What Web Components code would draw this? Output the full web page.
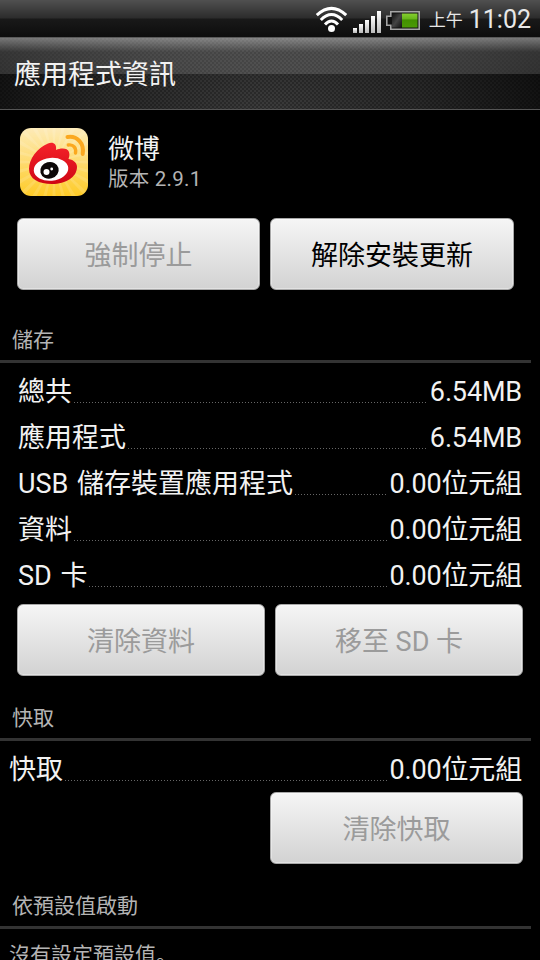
<!DOCTYPE html>
<html lang="zh-Hant">
<head>
<meta charset="utf-8">
<title>應用程式資訊</title>
<style>
  body {
    margin: 0;
    background: #000;
    color: #f2f2f2;
    font-family: Roboto, "Noto Sans CJK TC", sans-serif;
    overflow: hidden;
  }
</style>
</head>
<body>
<app-screen>
  <status-bar slot="status"><span slot="period">上午</span><span slot="time">11:02</span></status-bar>
  <title-bar slot="title">應用程式資訊</title-bar>

  <app-header><span slot="name">微博</span><span slot="version">版本 2.9.1</span></app-header>
  <button-row style="--pad: 0 26px 8px 17px; --cols: 243px 1fr">
    <htc-button disabled>強制停止</htc-button>
    <htc-button>解除安裝更新</htc-button>
  </button-row>

  <section-title>儲存</section-title>
  <info-row><span slot="label">總共</span>6.54MB</info-row>
  <info-row><span slot="label">應用程式</span>6.54MB</info-row>
  <info-row><span slot="label">USB 儲存裝置應用程式</span>0.00位元組</info-row>
  <info-row><span slot="label">資料</span>0.00位元組</info-row>
  <info-row><span slot="label">SD 卡</span>0.00位元組</info-row>
  <button-row style="--pad: 6px 17px 0 17px; --cols: 1fr 1fr">
    <htc-button disabled>清除資料</htc-button>
    <htc-button disabled>移至 SD 卡</htc-button>
  </button-row>

  <section-title>快取</section-title>
  <info-row style="--left: 9px"><span slot="label">快取</span>0.00位元組</info-row>
  <button-row style="--pad: 0 17px 0 270px">
    <htc-button disabled>清除快取</htc-button>
  </button-row>

  <section-title>依預設值啟動</section-title>
  <note-text>沒有設定預設值<span style="font-family: 'Noto Sans CJK SC'" lang="zh-Hans">。</span></note-text>
</app-screen>

<script>
  class AppScreen extends HTMLElement {
    constructor() {
      super();
      this.attachShadow({ mode: "open" }).innerHTML = `
        <style>
          :host {
            display: flex;
            flex-direction: column;
            width: 540px;
            height: 960px;
            overflow: hidden;
            background: #000;
          }
          main {
            display: flex;
            flex-direction: column;
          }
        </style>
        <slot name="status"></slot>
        <slot name="title"></slot>
        <main><slot></slot></main>
      `;
    }
  }

  class StatusBar extends HTMLElement {
    constructor() {
      super();
      this.attachShadow({ mode: "open" }).innerHTML = `
        <style>
          :host {
            display: flex;
            justify-content: flex-end;
            box-sizing: border-box;
            height: 37px;
            flex-shrink: 0;
            padding-right: 9px;
            background: linear-gradient(#505050, #2c2c2c 18px, #191919 19px, #0d0d0d);
            color: #e8e8e8;
            white-space: nowrap;
          }
          svg { display: block; margin-right: 9px; }
          .period { font-size: 17px; line-height: 41px; margin-right: 6px; }
          .time { font-size: 25px; line-height: 39px; }
        </style>
        <svg width="106" height="37" viewBox="314 0 106 37">
          <defs>
            <linearGradient id="bars" x1="0" y1="0" x2="0" y2="1">
              <stop offset="0" stop-color="#fff"/>
              <stop offset="1" stop-color="#bbb"/>
            </linearGradient>
            <linearGradient id="charge" x1="0" y1="0" x2="0" y2="1">
              <stop offset="0" stop-color="#86cf30"/>
              <stop offset=".4" stop-color="#66b51a"/>
              <stop offset=".45" stop-color="#429000"/>
              <stop offset="1" stop-color="#4b9a05"/>
            </linearGradient>
            <linearGradient id="empty" x1="0" y1="0" x2="1" y2="1">
              <stop offset="0" stop-color="#111"/>
              <stop offset=".5" stop-color="#444"/>
              <stop offset="1" stop-color="#111"/>
            </linearGradient>
          </defs>
          <!-- wifi -->
          <g fill="none" stroke="#fff" stroke-width="3">
            <path d="M316.800 15.200 Q331.500 1.500 346.200 15.200"/>
            <path d="M320.800 20 Q331.500 9.200 342.200 20"/>
            <path d="M325 24.500 Q331.500 17.500 338 24.500"/>
          </g>
          <circle cx="331.500" cy="28.500" r="3.500" fill="#fff"/>
          <!-- signal -->
          <g fill="url(#bars)">
            <rect x="353" y="28" width="4" height="5"/>
            <rect x="359" y="24" width="4" height="9"/>
            <rect x="365" y="20" width="4" height="13"/>
            <rect x="371" y="16" width="4" height="17"/>
            <rect x="377" y="11" width="4" height="22"/>
          </g>
          <!-- battery -->
          <path d="M390.800 11.800H419.200V29.200H390.800V25.200H386.800V16.200H390.800Z" fill="#111" stroke="#a5a5a5" stroke-width="1.600"/>
          <rect x="392" y="13.500" width="10" height="14" fill="url(#empty)"/>
          <rect x="402" y="13.500" width="15.500" height="14" fill="url(#charge)"/>
        </svg>
        <span class="period"><slot name="period"></slot></span>
        <span class="time"><slot name="time"></slot></span>
      `;
    }
  }

  class TitleBar extends HTMLElement {
    constructor() {
      super();
      this.attachShadow({ mode: "open" }).innerHTML = `
        <style>
          :host {
            display: block;
            box-sizing: border-box;
            height: 73px;
            flex-shrink: 0;
            padding-left: 14px;
            border-top: 1px solid #5a5a5a;
            border-bottom: 1px solid #555;
            background:
              linear-gradient(rgba(255,255,255,.44), rgba(255,255,255,.16) 14px, rgba(255,255,255,.14) 36px, transparent 36px),
              radial-gradient(circle at 1px 1px, rgba(0,0,0,.25) 0 .8px, transparent 1px) 0 0 / 4px 4px,
              radial-gradient(circle at 1px 1px, rgba(0,0,0,.25) 0 .8px, transparent 1px) 2px 2px / 4px 4px,
              radial-gradient(ellipse 290px 150px at 49% 100%, #3b3b3b, #282828 55%, #101010);
            font-size: 27px;
            line-height: 75px;
          }
        </style>
        <slot></slot>
      `;
    }
  }

  class AppHeader extends HTMLElement {
    constructor() {
      super();
      // sun rays behind the logo
      let rays = "";
      for (let a = 0; a < 360; a += 15) {
        rays += `<path d="M34 34 L31.500 -20 H36.500Z" transform="rotate(${a} 34 34)"/>`;
      }
      this.attachShadow({ mode: "open" }).innerHTML = `
        <style>
          :host {
            display: flex;
            box-sizing: border-box;
            height: 108px;
            padding: 18px 0 0 20px;
            gap: 20px;
          }
          svg { display: block; border-radius: 11px; }
          .text { display: flex; flex-direction: column; }
          .name { font-size: 26px; line-height: 42px; }
          .version { font-size: 20.500px; line-height: 19px; color: #b4b4b4; letter-spacing: .25px; }
        </style>
        <svg width="68" height="68" viewBox="0 0 68 68">
          <defs>
            <linearGradient id="bg" x1="0" y1="0" x2="0" y2="1">
              <stop offset="0" stop-color="#fdebb8"/>
              <stop offset=".5" stop-color="#fedb71"/>
              <stop offset="1" stop-color="#fecb28"/>
            </linearGradient>
            <linearGradient id="red" x1="0" y1="0" x2="0" y2="1">
              <stop offset="0" stop-color="#f5222a"/>
              <stop offset="1" stop-color="#cf0714"/>
            </linearGradient>
          </defs>
          <rect width="68" height="68" fill="url(#bg)"/>
          <g fill="#fff" opacity=".13">${rays}</g>
          <path d="M9 41 C9 31 17 20 28 15.500 C33 13.500 37 16 36 22 C41 19.500 48 20 49 24 C50 27 49 29 48.500 31 C54 32 57 35 57 39 C57 49 46 56 32 56 C19 56 9 51 9 41Z" fill="url(#red)"/>
          <ellipse cx="31" cy="41.300" rx="17.300" ry="11.400" fill="#fff" transform="rotate(-5 31 41.300)"/>
          <ellipse cx="29.500" cy="42.300" rx="9.300" ry="8.300" fill="#0c0808" transform="rotate(-15 29.500 42.300)"/>
          <circle cx="26.500" cy="44" r="3" fill="#fff"/>
          <circle cx="31.700" cy="41" r="1.400" fill="#fff"/>
          <g fill="none" stroke="#fba81f" stroke-linecap="round">
            <path d="M47.500 9 C57 7.500 64.500 15 62.700 26" stroke-width="4"/>
            <path d="M48.300 17 C53.500 16.200 56.500 20 55.500 25" stroke-width="3.400"/>
          </g>
        </svg>
        <div class="text">
          <span class="name"><slot name="name"></slot></span>
          <span class="version"><slot name="version"></slot></span>
        </div>
      `;
    }
  }

  class ButtonRow extends HTMLElement {
    constructor() {
      super();
      this.attachShadow({ mode: "open" }).innerHTML = `
        <style>
          :host {
            display: grid;
            grid-template-columns: var(--cols, 1fr);
            gap: 10px;
            padding: var(--pad, 0);
          }
        </style>
        <slot></slot>
      `;
    }
  }

  class HtcButton extends HTMLElement {
    constructor() {
      super();
      this.attachShadow({ mode: "open" }).innerHTML = `
        <style>
          :host {
            display: block;
            box-sizing: border-box;
            height: 72px;
            border: 1px solid #a8a8a8;
            border-radius: 6px;
            background: linear-gradient(#f5f5f5, #d2d2d2);
            box-shadow: inset 0 0 0 1px rgba(255,255,255,.35);
            color: #000;
            font-size: 27px;
            line-height: 74px;
            text-align: center;
          }
          :host([disabled]) { color: #9b9b9b; }
        </style>
        <slot></slot>
      `;
    }
  }

  class SectionTitle extends HTMLElement {
    constructor() {
      super();
      this.attachShadow({ mode: "open" }).innerHTML = `
        <style>
          :host {
            display: block;
            box-sizing: border-box;
            height: 65px;
            margin: 0 9px 5px 0;
            padding: 25px 0 0 12px;
            border-bottom: 3px solid #333;
            color: #b4b4b4;
            font-size: 21px;
            line-height: 35px;
          }
        </style>
        <slot></slot>
      `;
    }
  }

  class InfoRow extends HTMLElement {
    constructor() {
      super();
      this.attachShadow({ mode: "open" }).innerHTML = `
        <style>
          :host {
            display: flex;
            height: 46px;
            padding: 0 18px 0 var(--left, 18px);
            font-size: 27px;
            line-height: 49px;
            white-space: nowrap;
          }
          ::slotted([slot="label"]) { word-spacing: 2px; }
          .dots {
            flex: 1;
            height: 1px;
            margin: 34px 2px 0 2px;
            background: repeating-linear-gradient(90deg, #666 0 1px, transparent 1px 3px);
          }
          .value { letter-spacing: -.15px; }
        </style>
        <slot name="label"></slot>
        <span class="dots"></span>
        <span class="value"><slot></slot></span>
      `;
    }
  }

  class NoteText extends HTMLElement {
    constructor() {
      super();
      this.attachShadow({ mode: "open" }).innerHTML = `
        <style>
          :host {
            display: block;
            padding: 2px 0 0 9px;
            color: #b4b4b4;
            font-size: 21px;
            line-height: 34px;
          }
        </style>
        <slot></slot>
      `;
    }
  }

  customElements.define("app-screen", AppScreen);
  customElements.define("status-bar", StatusBar);
  customElements.define("title-bar", TitleBar);
  customElements.define("app-header", AppHeader);
  customElements.define("button-row", ButtonRow);
  customElements.define("htc-button", HtcButton);
  customElements.define("section-title", SectionTitle);
  customElements.define("info-row", InfoRow);
  customElements.define("note-text", NoteText);
</script>
</body>
</html>
